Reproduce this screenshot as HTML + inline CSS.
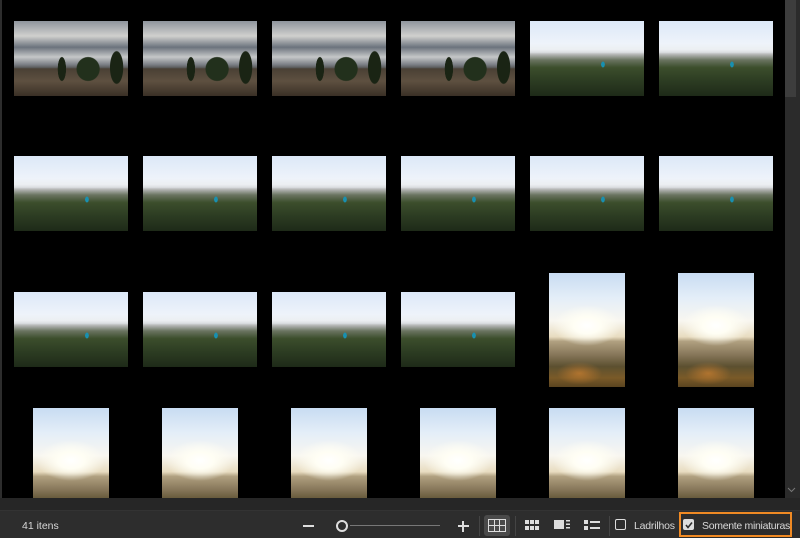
<!DOCTYPE html>
<html><head><meta charset="utf-8"><style>
*{margin:0;padding:0;box-sizing:border-box}
body{width:800px;height:538px;background:#2d2d2d;position:relative;overflow:hidden;font-family:"Liberation Sans",sans-serif}
#grid{position:absolute;left:2px;top:0;width:783px;height:498px;background:#000;overflow:hidden}
.t{position:absolute}
.a{width:114px;height:75px;background:
 radial-gradient(ellipse 5% 22% at 42% 64%,#1a2414 0,#1a2414 70%,rgba(0,0,0,0) 75%),
 radial-gradient(ellipse 14% 22% at 65% 64%,#22301c 0,#22301c 70%,rgba(0,0,0,0) 75%),
 radial-gradient(ellipse 8% 30% at 90% 62%,#1a2414 0,#1a2414 70%,rgba(0,0,0,0) 75%),
 linear-gradient(180deg,rgba(0,0,0,0) 0,rgba(0,0,0,0) 62%,#4a4034 64%,#5e5040 80%,#3a3026 100%),
 linear-gradient(180deg,#8e949c 0,#d0d0ce 20%,#6c737d 35%,#c5c7c8 48%,#7c8086 58%,#555 63%)}
.b{width:114px;height:75px;background:
 radial-gradient(ellipse 2.5% 6% at 64% 58%,#1890b0 0,#1890b0 60%,rgba(0,0,0,0) 70%),
 linear-gradient(180deg,rgba(0,0,0,0) 0,rgba(0,0,0,0) 42%,#b0b2b0 45%,#6a7460 52%,#3c4e2c 62%,#2c3c22 80%,#1e2a18 100%),
 linear-gradient(180deg,#dce8f8 0,#eef3fa 30%,#eceff2 38%,#d0d4d6 44%)}
.p{width:76px;background:
 radial-gradient(ellipse 45% 18% at 50% 46%,#ffffff 0,#fffef4 40%,rgba(255,240,200,0) 100%),
 radial-gradient(ellipse 30% 10% at 40% 88%,rgba(230,140,50,.55) 0,rgba(230,140,50,0) 100%),
 linear-gradient(180deg,rgba(0,0,0,0) 0,rgba(0,0,0,0) 56%,#b0a080 60%,#857558 72%,#5c5030 82%,#7a5a28 92%,#5a4420 100%),
 linear-gradient(180deg,#c8dcf2 0,#e4eef8 22%,#f8f6f0 42%,#e8dcc0 56%)}
#sb{position:absolute;left:785px;top:0;width:15px;height:498px;background:#2b2b2b}
#th{position:absolute;left:785px;top:0;width:11px;height:97px;background:#3d3d3d}
#strip{position:absolute;left:0;top:498px;width:800px;height:13px;background:#262626;border-bottom:1px solid #333}
.txt{position:absolute;color:#d8d8d8;font-size:10.5px;top:520px}
.ic{position:absolute}
</style></head><body>
<div id="grid">
<div class="t a" style="left:12px;top:21px"></div>
<div class="t a" style="left:141px;top:21px"></div>
<div class="t a" style="left:270px;top:21px"></div>
<div class="t a" style="left:399px;top:21px"></div>
<div class="t b" style="left:528px;top:21px"></div>
<div class="t b" style="left:657px;top:21px"></div>
<div class="t b" style="left:12px;top:156px"></div>
<div class="t b" style="left:141px;top:156px"></div>
<div class="t b" style="left:270px;top:156px"></div>
<div class="t b" style="left:399px;top:156px"></div>
<div class="t b" style="left:528px;top:156px"></div>
<div class="t b" style="left:657px;top:156px"></div>
<div class="t b" style="left:12px;top:292px"></div>
<div class="t b" style="left:141px;top:292px"></div>
<div class="t b" style="left:270px;top:292px"></div>
<div class="t b" style="left:399px;top:292px"></div>
<div class="t p" style="left:547px;top:273px;height:114px"></div>
<div class="t p" style="left:676px;top:273px;height:114px"></div>
<div class="t p" style="left:31px;top:408px;height:114px"></div>
<div class="t p" style="left:160px;top:408px;height:114px"></div>
<div class="t p" style="left:289px;top:408px;height:114px"></div>
<div class="t p" style="left:418px;top:408px;height:114px"></div>
<div class="t p" style="left:547px;top:408px;height:114px"></div>
<div class="t p" style="left:676px;top:408px;height:114px"></div>
</div>
<div id="sb"></div><div id="th"></div>
<svg class="ic" style="left:787px;top:487px" width="9" height="6"><path d="M1 1l3.5 3.5L8 1" stroke="#777" fill="none"/></svg>
<div id="strip"></div>
<div class="txt" style="left:22px">41 itens</div>
<div class="ic" style="left:303px;top:525px;width:11px;height:2px;background:#ddd"></div>
<div class="ic" style="left:336px;top:520px;width:12px;height:12px;border:2px solid #ddd;border-radius:50%"></div>
<div class="ic" style="left:350px;top:525px;width:90px;height:1px;background:#777"></div>
<div class="ic" style="left:458px;top:525px;width:11px;height:2px;background:#ddd"></div>
<div class="ic" style="left:462px;top:521px;width:2px;height:11px;background:#ddd"></div>
<div class="ic" style="left:479px;top:516px;width:1px;height:20px;background:#444"></div>
<div class="ic" style="left:484px;top:515px;width:26px;height:21px;background:#4a4a4a;border-radius:3px"></div>
<svg class="ic" style="left:488px;top:519px" width="18" height="13"><rect x="0.5" y="0.5" width="17" height="12" fill="none" stroke="#ddd"/><path d="M6.5 0v13M11.5 0v13M0 6.5h18" stroke="#ddd"/></svg>
<div class="ic" style="left:515px;top:516px;width:1px;height:20px;background:#444"></div>
<svg class="ic" style="left:525px;top:520px" width="15" height="11" fill="#ddd"><rect x="0" y="0" width="4" height="4"/><rect x="5" y="0" width="4" height="4"/><rect x="10" y="0" width="4" height="4"/><rect x="0" y="6" width="4" height="4"/><rect x="5" y="6" width="4" height="4"/><rect x="10" y="6" width="4" height="4"/></svg>
<svg class="ic" style="left:554px;top:520px" width="17" height="11" fill="#ddd"><rect x="0" y="0" width="10" height="9"/><rect x="12" y="0" width="4" height="1.5"/><rect x="12" y="3.5" width="4" height="1.5"/><rect x="12" y="7" width="4" height="1.5"/></svg>
<svg class="ic" style="left:584px;top:520px" width="16" height="11" fill="#ddd"><rect x="0" y="0" width="4" height="4"/><rect x="0" y="6" width="4" height="4"/><rect x="6" y="1" width="10" height="2"/><rect x="6" y="7" width="10" height="2"/></svg>
<div class="ic" style="left:609px;top:516px;width:1px;height:20px;background:#444"></div>
<div class="ic" style="left:615px;top:519px;width:11px;height:11px;border:1.5px solid #ddd;border-radius:2px"></div>
<div class="txt" style="left:634px;letter-spacing:-0.2px">Ladrilhos</div>
<div class="ic" style="left:679px;top:512px;width:113px;height:25px;border:2px solid #f08a24"></div>
<div class="ic" style="left:683px;top:519px;width:11px;height:11px;background:#ddd;border-radius:2px"></div>
<svg class="ic" style="left:684px;top:520px" width="10" height="10"><path d="M2 5l2 2.5 4-5" stroke="#2d2d2d" stroke-width="1.6" fill="none"/></svg>
<div class="txt" style="left:702px;letter-spacing:-0.3px">Somente miniaturas</div>
</body></html>
